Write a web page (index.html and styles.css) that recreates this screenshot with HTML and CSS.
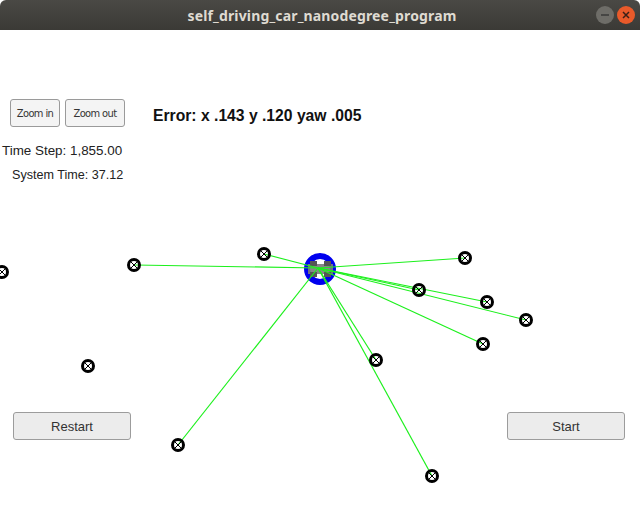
FILE: index.html
```html
<!DOCTYPE html>
<html>
<head>
<meta charset="utf-8">
<link rel="stylesheet" href="styles.css">
</head>
<body>
<div class="window">
  <header class="titlebar">
    <span class="title">self_driving_car_nanodegree_program</span>
    <div class="wbtns">
      <span class="wbtn min"><svg width="18" height="18" viewBox="0 0 18 18"><line x1="5" y1="9" x2="13" y2="9" stroke="#3a3a38" stroke-width="1.5"/></svg></span>
      <span class="wbtn close"><svg width="18" height="18" viewBox="0 0 18 18"><path d="M6 6 L12 12 M12 6 L6 12" stroke="#3a2018" stroke-width="1.5"/></svg></span>
    </div>
  </header>
  <main class="stage">
    <svg class="scene" width="640" height="480" viewBox="0 30 640 480">
      <g class="car">
        <circle cx="320" cy="269" r="13" fill="#fff" stroke="#0000ee" stroke-width="6"/>
        <rect x="308" y="264" width="25" height="10" fill="#7a7a7a" opacity="0.9"/>
        <rect x="310" y="261" width="7" height="5" fill="#555"/>
        <rect x="324" y="261" width="7" height="5" fill="#555"/>
        <rect x="310" y="272" width="7" height="5" fill="#555"/>
        <rect x="324" y="272" width="7" height="5" fill="#555"/>
      </g>
      <g stroke="#1cf01c" stroke-width="1.2">
        <line x1="318" y1="268" x2="135" y2="265"/>
        <line x1="318" y1="268" x2="264" y2="254"/>
        <line x1="318" y1="268" x2="465" y2="258"/>
        <line x1="318" y1="268" x2="419" y2="290"/>
        <line x1="318" y1="268" x2="487" y2="302"/>
        <line x1="318" y1="268" x2="526" y2="320"/>
        <line x1="318" y1="268" x2="483" y2="344"/>
        <line x1="318" y1="268" x2="376" y2="360"/>
        <line x1="318" y1="268" x2="178" y2="445"/>
        <line x1="318" y1="268" x2="432" y2="476"/>
      </g>
      <g class="lm" fill="none" stroke="#000">
        <g transform="translate(2,272)"><circle r="5.5" stroke-width="3"/><path d="M-3 -3L3 3M3 -3L-3 3" stroke-width="1"/></g>
        <g transform="translate(134,265)"><circle r="5.5" stroke-width="3"/><path d="M-3 -3L3 3M3 -3L-3 3" stroke-width="1"/></g>
        <g transform="translate(264,254)"><circle r="5.5" stroke-width="3"/><path d="M-3 -3L3 3M3 -3L-3 3" stroke-width="1"/></g>
        <g transform="translate(465,258)"><circle r="5.5" stroke-width="3"/><path d="M-3 -3L3 3M3 -3L-3 3" stroke-width="1"/></g>
        <g transform="translate(419,290)"><circle r="5.5" stroke-width="3"/><path d="M-3 -3L3 3M3 -3L-3 3" stroke-width="1"/></g>
        <g transform="translate(487,302)"><circle r="5.5" stroke-width="3"/><path d="M-3 -3L3 3M3 -3L-3 3" stroke-width="1"/></g>
        <g transform="translate(526,320)"><circle r="5.5" stroke-width="3"/><path d="M-3 -3L3 3M3 -3L-3 3" stroke-width="1"/></g>
        <g transform="translate(483,344)"><circle r="5.5" stroke-width="3"/><path d="M-3 -3L3 3M3 -3L-3 3" stroke-width="1"/></g>
        <g transform="translate(376,360)"><circle r="5.5" stroke-width="3"/><path d="M-3 -3L3 3M3 -3L-3 3" stroke-width="1"/></g>
        <g transform="translate(88,366)"><circle r="5.5" stroke-width="3"/><path d="M-3 -3L3 3M3 -3L-3 3" stroke-width="1"/></g>
        <g transform="translate(178,445)"><circle r="5.5" stroke-width="3"/><path d="M-3 -3L3 3M3 -3L-3 3" stroke-width="1"/></g>
        <g transform="translate(432,476)"><circle r="5.5" stroke-width="3"/><path d="M-3 -3L3 3M3 -3L-3 3" stroke-width="1"/></g>
      </g>
    </svg>
    <div class="controls">
      <div class="toprow">
        <button class="zbtn zin">Zoom in</button>
        <button class="zbtn zout">Zoom out</button>
        <span class="error">Error: x .143 y .120 yaw .005</span>
      </div>
      <div class="timestep">Time Step: 1,855.00</div>
      <div class="systime">System Time: 37.12</div>
      <div class="bottomrow">
        <button class="btn">Restart</button>
        <button class="btn">Start</button>
      </div>
    </div>
  </main>
</div>
</body>
</html>
```
FILE: styles.css
```css
* { box-sizing: border-box; }
html, body { margin: 0; padding: 0; background: #fff; }
.window { width: 640px; height: 510px; overflow: hidden; font-family: "Liberation Sans", Arial, sans-serif; }
.titlebar {
  height: 30px;
  background: linear-gradient(#4a4945, #3b3a36);
  border-radius: 6px 6px 0 0;
  display: flex;
  align-items: center;
  justify-content: center;
  position: relative;
}
.title {
  font-family: "Noto Sans", "DejaVu Sans", sans-serif;
  font-weight: bold;
  font-size: 14px;
  color: #dfdbd2;
  letter-spacing: 0.15px;
  margin-left: 4px;
}
.wbtns {
  position: absolute;
  right: 5px;
  top: 6px;
  display: flex;
  gap: 3px;
}
.wbtn { width: 18px; height: 18px; border-radius: 50%; display: flex; }
.wbtn.min { background: #6e6d68; }
.wbtn.close { background: #e95a2a; }
.stage { position: relative; height: 480px; }
.scene { position: absolute; left: 0; top: 0; }
.controls { position: relative; padding-top: 69px; height: 480px; display: flex; flex-direction: column; }
.toprow { display: flex; align-items: center; padding-left: 10px; height: 28px; }
.zbtn {
  height: 28px;
  border: 1px solid #9a9a9a;
  border-radius: 3px;
  background: #f4f4f4;
  color: #333;
  font-family: "Liberation Sans Narrow", "DejaVu Sans Condensed", "Liberation Sans", sans-serif;
  font-stretch: condensed;
  font-size: 11px;
  letter-spacing: -0.6px;
  padding: 0;
}
.zin { width: 50px; }
.zout { width: 60px; margin-left: 5px; }
.error { margin-left: 28px; font-weight: bold; font-size: 15.7px; color: #111; position: relative; top: 3px; }
.timestep { margin-top: 16px; padding-left: 2px; font-size: 13.4px; color: #222; line-height: 16px; }
.systime { margin-top: 8px; padding-left: 12px; font-size: 12.6px; color: #222; line-height: 16px; }
.bottomrow { margin-top: auto; margin-bottom: 70px; display: flex; justify-content: space-between; padding: 0 15px 0 13px; }
.btn {
  width: 118px;
  height: 28px;
  border: 1px solid #9c9c9c;
  border-radius: 3px;
  background: #ececec;
  color: #333;
  font-family: "Liberation Sans", Arial, sans-serif;
  font-size: 13px;
  padding: 0;
}
```
